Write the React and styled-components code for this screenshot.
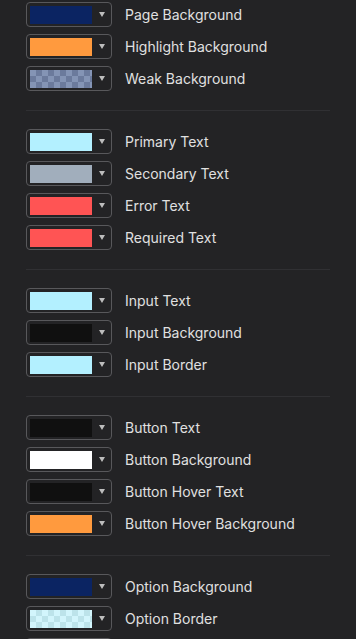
import React from "react";
import styled, { createGlobalStyle, css } from "styled-components";

const GlobalStyle = createGlobalStyle`
  html, body {
    margin: 0;
    padding: 0;
    background: #232325;
    overflow: hidden;
  }
`;

const groups = [
  [
    { label: "Page Background", color: "#0b2462" },
    { label: "Highlight Background", color: "#ff9a3e" },
    { label: "Weak Background", checker: ["#8494b5", "#6b7a9c"] },
  ],
  [
    { label: "Primary Text", color: "#b3f0ff" },
    { label: "Secondary Text", color: "#a1aebc" },
    { label: "Error Text", color: "#ff5454" },
    { label: "Required Text", color: "#ff5454" },
  ],
  [
    { label: "Input Text", color: "#b3f0ff" },
    { label: "Input Background", color: "#101010" },
    { label: "Input Border", color: "#b3f0ff" },
  ],
  [
    { label: "Button Text", color: "#101010" },
    { label: "Button Background", color: "#ffffff" },
    { label: "Button Hover Text", color: "#101010" },
    { label: "Button Hover Background", color: "#ff9a3e" },
  ],
  [
    { label: "Option Background", color: "#0b2462" },
    { label: "Option Border", checker: ["#d2f5fc", "#bce3ea"] },
    { label: "Option Text", color: "#b3f0ff" },
  ],
];

const Panel = styled.div`
  padding: 2px 26px 0;
  font-family: Inter, "Noto Sans", sans-serif;
`;

const Group = styled.div`
  display: flex;
  flex-direction: column;
  gap: 7px;
  padding: 18px 0 19px;
  border-top: 1px solid #303033;

  &:first-child {
    border-top: none;
    padding-top: 0;
  }
`;

const Row = styled.div`
  display: flex;
  align-items: center;
  gap: 13px;
`;

const SwatchButton = styled.button`
  display: flex;
  align-items: center;
  width: 86px;
  height: 25px;
  padding: 0 0 0 3px;
  box-sizing: border-box;
  background: transparent;
  border: 1px solid #58585b;
  border-radius: 4px;
  cursor: pointer;
`;

const Swatch = styled.span`
  display: block;
  width: 62px;
  height: 18px;
  ${({ $color }) => $color && css`background: ${$color};`}
  ${({ $checker }) =>
    $checker &&
    css`
      background-color: ${$checker[0]};
      background-image: linear-gradient(45deg, ${$checker[1]} 25%, transparent 25%, transparent 75%, ${$checker[1]} 75%),
        linear-gradient(45deg, ${$checker[1]} 25%, transparent 25%, transparent 75%, ${$checker[1]} 75%);
      background-size: 12px 12px;
      background-position: 0 0, 6px 6px;
    `}
`;

const Arrow = styled.span`
  flex: 1;
  display: flex;
  justify-content: center;
  svg {
    display: block;
  }
`;

const Label = styled.span`
  font-size: 14px;
  color: #e0e0e0;
  white-space: nowrap;
`;

export default function App() {
  return (
    <>
      <GlobalStyle />
      <Panel>
        {groups.map((items, gi) => (
          <Group key={gi}>
            {items.map((it) => (
              <Row key={it.label}>
                <SwatchButton>
                  <Swatch $color={it.color} $checker={it.checker} />
                  <Arrow>
                    <svg width="6" height="5" viewBox="0 0 6 5">
                      <path d="M0 0H6L3 5Z" fill="#bdbdbd" />
                    </svg>
                  </Arrow>
                </SwatchButton>
                <Label>{it.label}</Label>
              </Row>
            ))}
          </Group>
        ))}
      </Panel>
    </>
  );
}
